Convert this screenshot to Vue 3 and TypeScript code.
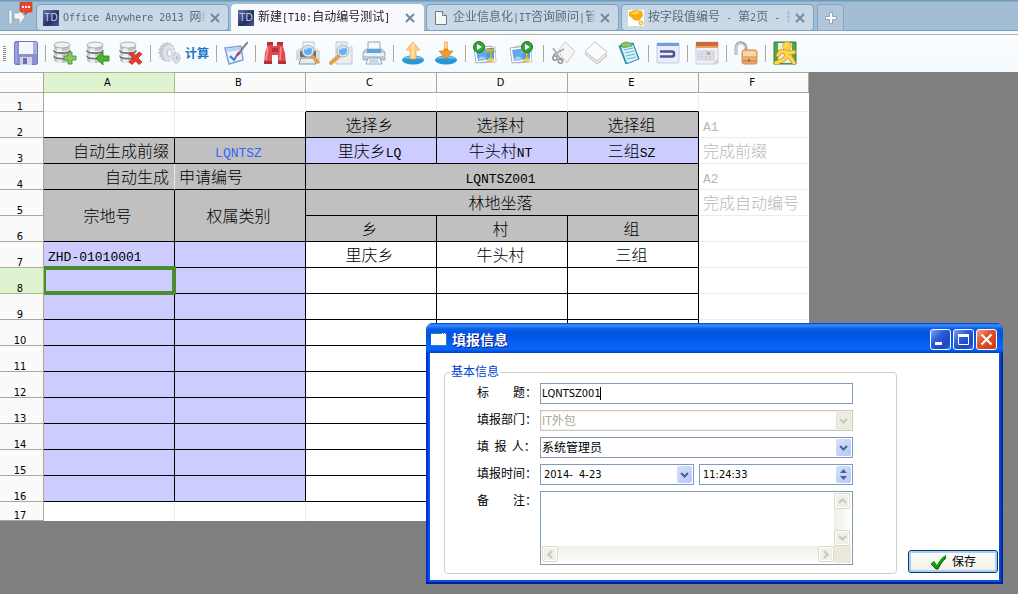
<script setup lang="ts">
import { ref } from 'vue'

interface Tab { title: string; icon: string; active?: boolean }
interface Cell { t?: string; c: string; cs?: number; rs?: number }
interface Tool { name: string; label: string; text?: string; framed?: boolean }

const runs = (text: string): { s: string; latin: boolean }[] =>
  (text.match(/[\x00-\x7f]+|[^\x00-\x7f]+/g) ?? []).map(s => ({ s, latin: s.charCodeAt(0) < 128 }))

const tabs: Tab[] = [
  { title: 'Office Anywhere 2013 网络', icon: 'td' },
  { title: '新建[T10:自动编号测试]', icon: 'td', active: true },
  { title: '企业信息化|IT咨询顾问|管', icon: 'page' },
  { title: '按字段值编号 - 第2页 - 技', icon: 'club' },
]

const db = `<path d="M1 4v15c0 2 3 3 8 3s8-1 8-3V4z" fill="#c4c4c4"/><path d="M4 5v16c1 .6 3 1 5 1V5z" fill="#ececec"/><path d="M1 9c0 4 16 4 16 0M1 14.500c0 4 16 4 16 0" fill="none" stroke="#777" stroke-width="1.800"/><path d="M1 8c0 3.500 16 3.500 16 0M1 13.500c0 3.500 16 3.500 16 0" fill="none" stroke="#fff" stroke-width=".8"/><ellipse cx="9" cy="4" rx="8" ry="3" fill="#f2f2f2" stroke="#999" stroke-width=".8"/>`
const lens = (x: number, y: number) => `<circle cx="${x}" cy="${y}" r="5" fill="#68aef5" stroke="#dfe8f2" stroke-width="1.800"/><circle cx="${x}" cy="${y}" r="6" fill="none" stroke="#8795a6" stroke-width=".6"/><path d="M${x - 3} ${y - 1}c1-3 4-3 5-2" stroke="#c5e4ff" stroke-width="1.500" fill="none"/>`
const sceneArt = `<path d="M7 5l15 1 1 15-15 1z" fill="#fff" stroke="#aaa" stroke-width=".7"/><path d="M1 7l17-2 2 15-17 2z" fill="#fff" stroke="#999" stroke-width=".8"/><path d="M3 9l14-2 1 11-13 2z" fill="#62a9ec"/><path d="M14 7h7v12h-7z" fill="#4c9ce8"/><path d="M5 19c2-5 6-4 8-1z" fill="#a9d4f5"/><path d="M14 20c1-4 5-4 7-2v2z" fill="#f3d234"/><path d="M18 18c0-4 0-6-1-8M17 10c-3-1-4 1-4 2M17 10c2-2 4-1 5 1M17 10c-1-2-3-2-4-1" stroke="#dcb71e" stroke-width="1.600" fill="none"/>`
const play = (x: number) => `<circle cx="${x}" cy="6" r="5.500" fill="#36a336" stroke="#187b25"/><path d="M${x - 2} 3v6l5-3z" fill="#fff"/>`

const icons: Record<string, string> = {
  save: `<rect x=".6" y=".6" width="22.800" height="22.800" rx="1.500" fill="#8b92d2" stroke="#6970b8"/><path d="M5 1h14v12H5z" fill="#f4f6fb"/><path d="M19 1h4v12h-4z" fill="#abb0e3"/><path d="M6 16h12v8H6z" fill="#d2d4df"/><path d="M9 17h4v6H9z" fill="#6871a9"/><path d="M2 2v20" stroke="#b5baf0"/>`,
  dbAdd: db + `<path d="M14 11h4v4h4v4h-4v4h-4v-4h-4v-4h4z" transform="translate(1)" fill="#87c65b" stroke="#458c28" stroke-width=".8"/>`,
  dbBack: db + `<path d="M10 17l7-6v4h6v5h-6v4z" fill="#49b52a" stroke="#248115" stroke-width=".8"/>`,
  dbDel: db + `<path d="M10 13l3-2 3.500 3.500L20 11l3 2-4 4 4 4-3 2.500-3.500-3.500-3.500 3.500-3-2.500 4-4z" fill="#e83a2d" stroke="#b21f19" stroke-width=".7"/>`,
  gears: `<ellipse cx="9" cy="11" rx="7.500" ry="9" fill="#c6ccd3" stroke="#c0c7cf" stroke-width="2" stroke-dasharray="2 1.400"/><ellipse cx="11" cy="12" rx="6" ry="8" fill="#dfe4ea"/><ellipse cx="11" cy="12" rx="2.500" ry="4" fill="#bfc7d0"/><ellipse cx="11.500" cy="12" rx="1.500" ry="3" fill="#f5fbff"/><ellipse cx="18.500" cy="17" rx="3.500" ry="5" fill="#dde1e6" stroke="#c0c7cf" stroke-width="1.500" stroke-dasharray="1.500 1"/><ellipse cx="19" cy="17" rx="1.200" ry="2" fill="#b5bdc7"/>`,
  check: `<path d="M1 7l16-2 2 14-14 4z" fill="#eaf3fe" stroke="#7fa2d6" stroke-width="1.500"/><path d="M2 8l14-2 .5 3-14 2z" fill="#b8d1f2"/><path d="M6 15l4 4 5-8" fill="none" stroke="#3f78cb" stroke-width="2"/><path d="M15 11l7-9 2-1-1 2-7 9z" fill="#8c8f99" stroke="#74504f" stroke-width=".6"/><path d="M12 14l3-3 2 1-3 3z" fill="#d0393b"/>`,
  binoculars: `<path d="M4 1h6v4h4V1h6v5l2 6 1 11h-8v-9H9v9H1l1-11 2-6z" fill="#dc4b4f"/><path d="M4 1h6v3H4zM14 1h6v3h-6zM1 20h8v3H1zM15 20h8v3h-8zM9 7h6v4H9z" fill="#b82f38"/><path d="M5 6L3 19M18 6l-1 13" stroke="#f58e8a" stroke-width="1.800"/>`,
  preview: `<path d="M7 1h11v9H7z" fill="#f5f7fa" stroke="#aaa" stroke-width=".7"/><path d="M0 10l4-3h16l4 3v9H0z" fill="#d8dade"/><path d="M4 10h16v6H4z" fill="#6f7276"/><path d="M5 17h13l2 6H3z" fill="#e9ebef" stroke="#777" stroke-width=".8"/><path d="M16 15l6 6" stroke="#df9e4b" stroke-width="3.500" stroke-linecap="round"/>` + lens(12, 10),
  search: `<path d="M7 1h11l5 5v17H7z" fill="#ecedf0" stroke="#c1c5cb"/><path d="M18 1v5h5" fill="#fff" stroke="#c1c5cb" stroke-width=".7"/><path d="M10 15l-8 7" stroke="#e1a34f" stroke-width="4" stroke-linecap="round"/>` + lens(14, 10),
  print: `<path d="M6 1h12v10H6z" fill="#f7f8fb" stroke="#8490a0" stroke-width=".8"/><path d="M1 11l3-3h16l3 3v8H1z" fill="#c3c9dd" stroke="#8d96b0" stroke-width=".6"/><path d="M5 8h14v4H5z" fill="#55a8dc"/><path d="M2 12h20v3H2z" fill="#eef0f7"/><path d="M6 17h12l2 6H4z" fill="#f8fafc" stroke="#8893a5" stroke-width=".8"/><path d="M7 19h9M7 21h10" stroke="#69afd9" stroke-width=".8"/>`,
  upload: `<ellipse cx="12" cy="19" rx="11" ry="4.500" fill="#2897d4"/><path d="M2 18c3-4 17-4 20 0-4-1-16-1-20 0z" fill="#75cdf0"/><path d="M12 1l7 8h-4v9H9V9H5z" fill="#ffcc80" stroke="#f4a94d" stroke-width=".7"/><path d="M12 3v14" stroke="#ffe5b5" stroke-width="2"/>`,
  download: `<ellipse cx="12" cy="19" rx="11" ry="4.500" fill="#2897d4"/><path d="M2 18c4-4 16-4 20 0-4-1-16-1-20 0z" fill="#75cdf0"/><path d="M10.500 9V1h3v8z" fill="#ffd796" stroke="#eca33d" stroke-width=".7"/><path d="M10 8h4v2h5l-7 8-7-8h5z" fill="#f59a2b" stroke="#d57a16" stroke-width=".7"/>`,
  picBack: sceneArt + play(6),
  picNext: sceneArt + play(18),
  cut: `<path d="M8 9l6-8 10 9-8 12-6-7z" fill="#f5f5f5" stroke="#c6c6c6"/><path d="M2 7l9 13M2 14l11-6" stroke="#a9a9a9" stroke-width="1.500"/><circle cx="4" cy="17" r="2.200" fill="none" stroke="#919191" stroke-width="1.400"/><circle cx="9.500" cy="20" r="2.200" fill="none" stroke="#919191" stroke-width="1.400"/>`,
  copy: `<path d="M1 13L10 3l13 12-10 8z" fill="#e9e9e9" stroke="#bdbdbd"/><path d="M1 10L11 1l12 10-10 9z" fill="#fcfcfc" stroke="#c3c3c3"/>`,
  paste: `<path d="M2 5l14-3 6 16-13 5z" fill="#2c9cb0" stroke="#2789a0"/><path d="M4 6l12-2 5 14-11 4z" fill="#d8f2ff"/><path d="M7 9l9-2M8 12l9-2M9 15l9-2M10 18l9-2" stroke="#62b1d5"/><path d="M4 3l4-2 6 1 1 3-9 2z" fill="#8ac65f" stroke="#4d9c4a" stroke-width=".7"/>`,
  link: `<rect x="1" y="2" width="22" height="20" rx="1" fill="#e9edf7" stroke="#c4cbdb"/><path d="M1 2h22v3H1z" fill="#6e9ee8"/><path d="M4 10.500h12q2 0 2 2v1q0 2-2 2H4" fill="none" stroke="#4d5697" stroke-width="2.500"/>`,
  calendar: `<rect x="1" y="1" width="22" height="22" rx="1" fill="#f1f1f3" stroke="#cfcdcf"/><path d="M1 1h22v5H1z" fill="#c96a37"/><path d="M1 5h22v2H1z" fill="#e59d6c"/><path d="M3 10h16v9H3z" fill="#e2e7f3"/><path d="M3 10h16v9H3zM7 10v9M11 10v9M15 10v9M3 13h16M3 16h16" fill="none" stroke="#c0c8de" stroke-width=".8"/><path d="M12 11h3v3h-3z" fill="#ee9878"/><path d="M17 23l6-6v6z" fill="#d4d4d4"/>`,
  unlock: `<path d="M2 14V7c0-7 9-7 10 0v3" fill="none" stroke="#a8a8a8" stroke-width="3"/><path d="M2 14V7c0-6 8-6 9 0" fill="none" stroke="#e4e4e4"/><rect x="8" y="9" width="15" height="14" rx="2" fill="#e9aa6c" stroke="#d18c52"/><path d="M9 10h13v5H9z" fill="#f8d5a9"/><path d="M9 20h13" stroke="#c97840"/><path d="M14 18h2v3h-2z" fill="#b56b38"/>`,
  exit: `<path d="M1 1h22v22H1z" fill="#51a647" stroke="#33853a"/><path d="M5 2h14v20H5z" fill="#e9ecea"/><path d="M12 10l-5 1-2 3M12 10l2 5-4 4-7 3M14 14l4 3 3 5M13 10l4 2 4-1" fill="none" stroke="#ce901b" stroke-width="4.500" stroke-linecap="round" stroke-linejoin="round"/><path d="M12 10l-5 1-2 3M12 10l2 5-4 4-7 3M14 14l4 3 3 5M13 10l4 2 4-1" fill="none" stroke="#ffd84c" stroke-width="3" stroke-linecap="round" stroke-linejoin="round"/><circle cx="14" cy="5" r="4.200" fill="#ffd34c" stroke="#dda026" stroke-width=".8"/>`,
}

const groups: Tool[][] = [
  [{ name: 'save', label: '保存表格' }],
  [{ name: 'dbAdd', label: '添加' }, { name: 'dbBack', label: '导入' }, { name: 'dbDel', label: '删除' }],
  [{ name: 'gears', label: '计算', text: '计算' }],
  [{ name: 'check', label: '校验' }],
  [{ name: 'binoculars', label: '查找' }, { name: 'preview', label: '打印预览' }, { name: 'search', label: '查看' }, { name: 'print', label: '打印' }],
  [{ name: 'upload', label: '上传' }, { name: 'download', label: '下载' }],
  [{ name: 'picBack', label: '上一图' }, { name: 'picNext', label: '下一图', framed: true }],
  [{ name: 'cut', label: '剪切' }, { name: 'copy', label: '复制' }, { name: 'paste', label: '粘贴' }],
  [{ name: 'link', label: '附件' }],
  [{ name: 'calendar', label: '日历' }],
  [{ name: 'unlock', label: '解锁' }],
  [{ name: 'exit', label: '退出' }],
]

const cols = ['A', 'B', 'C', 'D', 'E', 'F']
const note = (t = ''): Cell => ({ t, c: 'note' })
const entry = (): Cell[] => [
  { c: 'fill k' }, { c: 'fill k' }, { c: 'k' }, { c: 'k' }, { c: 'k' }, note(),
]

const rows: Cell[][] = [
  [{ c: '' }, { c: '' }, { c: 'kb' }, { c: 'kb' }, { c: 'kb' }, note()],
  [{ c: 'kb' }, { c: 'k' }, { t: '选择乡', c: 'head k' }, { t: '选择村', c: 'head k' }, { t: '选择组', c: 'head k' }, note('A1')],
  [{ t: '自动生成前缀', c: 'head k right' }, { t: 'LQNTSZ', c: 'head k blue' }, { t: '里庆乡LQ', c: 'fill k' }, { t: '牛头村NT', c: 'fill k' }, { t: '三组SZ', c: 'fill k' }, note('完成前缀')],
  [{ t: '自动生成', c: 'head kb right' }, { t: '申请编号', c: 'head k left' }, { t: 'LQNTSZ001', c: 'head k', cs: 3 }, note('A2')],
  [{ t: '宗地号', c: 'head k', rs: 2 }, { t: '权属类别', c: 'head k', rs: 2 }, { t: '林地坐落', c: 'head k', cs: 3 }, note('完成自动编号')],
  [{ t: '乡', c: 'head k' }, { t: '村', c: 'head k' }, { t: '组', c: 'head k' }, note()],
  [{ t: 'ZHD-01010001', c: 'fill k left' }, { c: 'fill k' }, { t: '里庆乡', c: 'k' }, { t: '牛头村', c: 'k' }, { t: '三组', c: 'k' }, note()],
  ...Array.from({ length: 9 }, entry),
  [{ c: 'last' }, { c: 'last' }, { c: 'last' }, { c: 'last' }, { c: 'last' }, { c: 'last' }],
]
rows[7][0].c += ' selected'

const title = ref('LQNTSZ001')
const dept = ref('IT外包')
const person = ref('系统管理员')
const date = ref('2014-  4-23')
const time = ref('11:24:33')
const remark = ref('')
</script>

<template>
  <div class="app">
    <nav class="tabs" aria-label="标签页">
      <button class="pin" type="button" aria-label="消息">
        <svg width="26" height="24" viewBox="0 0 26 24">
          <path d="M1 8h3v14H1zM6 11h5V7l6 8-6 8v-6H6z" fill="#f5f5f2" stroke="#8fa5b6" stroke-width=".7" />
          <path d="M12 1q0-1 1-1h10q1 0 1 1v8q0 1-1 1h-3l-3 3v-3h-4q-1 0-1-1z" fill="#ed442e" stroke="#c93426" stroke-width=".7" />
          <path d="M14 4h2v2h-2zM17 4h2v2h-2zM20 4h2v2h-2z" fill="#fff" />
        </svg>
      </button>
      <div v-for="tab in tabs" :key="tab.title" class="tab" :class="{ active: tab.active }">
        <span v-if="tab.icon === 'td'" class="td-logo">TD</span>
        <svg v-else-if="tab.icon === 'page'" class="tab-icon" viewBox="0 0 16 16">
          <path d="M2.500 1.500h7l4 4v9h-11z" fill="#f4f8f4" stroke="#727d80" /><path d="M9.500 1.500v4h4" fill="#d8dedb" stroke="#727d80" />
        </svg>
        <svg v-else class="tab-icon" viewBox="0 0 16 16">
          <path d="M0 0h16v16H0z" fill="#fff" /><path d="M1 2l6-2 7 1 1 5-4 5-5-1-3-3-2-1z" fill="#fba90a" /><path d="M2 3l7-2 3 2-5 2z" fill="#ffd34d" /><circle cx="13" cy="13" r="2" fill="#ffe09a" stroke="#f2a61b" />
        </svg>
        <a class="tab-title" href="#"><span v-for="(r, i) in runs(tab.title)" :key="i" :class="{ latin: r.latin }">{{ r.s }}</span></a>
        <button class="close" type="button" aria-label="关闭标签">
          <svg width="10" height="10" viewBox="0 0 10 10"><path d="M1 1l8 8M9 1L1 9" stroke="#6d8ba5" stroke-width="2" /></svg>
        </button>
      </div>
      <button class="add" type="button" aria-label="新标签页">
        <svg width="12" height="12" viewBox="0 0 12 12"><path d="M4.500.5h3v4h4v3h-4v4h-3v-4h-4v-3h4z" fill="#fff" stroke="#8697a6" stroke-width=".8" /></svg>
      </button>
    </nav>

    <div class="toolbar" role="toolbar">
      <span class="grip" />
      <div v-for="(group, g) in groups" :key="g" class="group">
        <button v-for="tool in group" :key="tool.name" type="button" class="tool" :class="{ wide: tool.text, framed: tool.framed }" :aria-label="tool.label">
          <svg width="24" height="24" viewBox="0 0 24 24" v-html="icons[tool.name]" />
          <span v-if="tool.text">{{ tool.text }}</span>
        </button>
      </div>
    </div>

    <main class="desk">
      <table class="sheet">
        <colgroup><col class="c-num"><col v-for="c in cols" :key="c" :class="c === 'F' ? 'c-last' : 'c-main'"></colgroup>
        <thead>
          <tr><th /><th v-for="c in cols" :key="c" scope="col" :class="{ on: c === 'A' }">{{ c }}</th></tr>
        </thead>
        <tbody>
          <tr v-for="(row, i) in rows" :key="i">
            <th scope="row" :class="{ on: i === 7 }">{{ i + 1 }}</th>
            <td v-for="(cell, j) in row" :key="j" :class="cell.c" :colspan="cell.cs" :rowspan="cell.rs">
              <span v-for="(r, n) in runs(cell.t ?? '')" :key="n" :class="{ latin: r.latin }">{{ r.s }}</span>
            </td>
          </tr>
        </tbody>
      </table>
    </main>

    <section class="dialog" role="dialog" aria-labelledby="dialog-title">
      <header class="titlebar">
        <svg width="16" height="13" viewBox="0 0 16 13"><path d="M0 0h16v13H0z" fill="#2d7fd0" /><path d="M0 1h15v11H0z" fill="#fffff8" /><path d="M11 0h1v1h-1zM13 0h1v1h-1z" fill="#fff" /></svg>
        <h1 id="dialog-title">填报信息</h1>
        <button type="button" class="win" aria-label="最小化"><svg viewBox="0 0 19 19"><path d="M4 12h7v3H4z" fill="#fff" /></svg></button>
        <button type="button" class="win" aria-label="最大化"><svg viewBox="0 0 19 19"><path d="M4.500 5.500h10v9h-10z" fill="none" stroke="#fff" /><path d="M4 4h11v3H4z" fill="#fff" /></svg></button>
        <button type="button" class="win quit" aria-label="关闭"><svg viewBox="0 0 19 19"><path d="M4.500 4.500l10 10M14.500 4.500l-10 10" stroke="#fff" stroke-width="2.200" /></svg></button>
      </header>
      <form class="body" @submit.prevent>
        <fieldset>
          <legend>基本信息</legend>
          <div class="fields">
            <label for="f-title">标　　题：</label>
            <div class="box typing"><span class="caret-host"><input id="f-title" v-model="title" type="text"></span></div>

            <label for="f-dept">填报部门：</label>
            <div class="box off">
              <select id="f-dept" v-model="dept" disabled><option>IT外包</option></select>
              <span class="drop"><svg viewBox="0 0 9 6"><path d="M1 1l3.500 3.500L8 1" /></svg></span>
            </div>

            <label for="f-person">填&#8194;报&#8194;人：</label>
            <div class="box">
              <select id="f-person" v-model="person"><option>系统管理员</option></select>
              <span class="drop"><svg viewBox="0 0 9 6"><path d="M1 1l3.500 3.500L8 1" /></svg></span>
            </div>

            <label for="f-date">填报时间：</label>
            <div class="pair">
              <div class="box">
                <input id="f-date" v-model="date" type="text">
                <button type="button" class="drop" aria-label="选择日期"><svg viewBox="0 0 9 6"><path d="M1 1l3.500 3.500L8 1" /></svg></button>
              </div>
              <div class="box">
                <input v-model="time" type="text" aria-label="时间">
                <span class="spin">
                  <button type="button" aria-label="增加"><svg viewBox="0 0 7 4"><path d="M0 4l3.500-4L7 4z" /></svg></button>
                  <button type="button" aria-label="减少"><svg viewBox="0 0 7 4"><path d="M0 0l3.500 4L7 0z" /></svg></button>
                </span>
              </div>
            </div>

            <label for="f-remark">备　　注：</label>
            <div class="memo">
              <textarea id="f-remark" v-model="remark" />
              <div class="bar v">
                <span class="arrow"><svg viewBox="0 0 9 6"><path d="M1 5l3.500-3.500L8 5" /></svg></span>
                <span class="arrow"><svg viewBox="0 0 9 6"><path d="M1 1l3.500 3.500L8 1" /></svg></span>
              </div>
              <div class="bar h">
                <span class="arrow"><svg class="side" viewBox="0 0 6 9"><path d="M5 1L1.500 4.500 5 8" /></svg></span>
                <span class="arrow"><svg class="side" viewBox="0 0 6 9"><path d="M1 1l3.500 3.500L1 8" /></svg></span>
              </div>
              <span class="corner" />
            </div>
          </div>
        </fieldset>
        <button type="submit" class="save">
          <svg width="17" height="16" viewBox="0 0 17 16"><path d="M1 9l3-2 3 4c2-4 5-8 9-10v3c-4 3-6 7-8 11H6z" fill="#07a30d" /><path d="M1 10l5 5h2c2-4 4-8 8-11" fill="none" stroke="#04510b" /></svg>
          保存
        </button>
      </form>
    </section>
  </div>
</template>

<style>
html, body { background: #808080; }
</style>

<style scoped>
* { box-sizing: border-box; }
.app {
  position: relative;
  display: flex;
  flex-direction: column;
  min-height: 100vh;
  overflow: hidden;
  background: #808080;
  color: #000;
  font: 12px/14px "DejaVu Sans Condensed", "Noto Sans CJK SC", sans-serif;
}
button { margin: 0; padding: 0; border: 0; background: none; color: inherit; font: inherit; }
svg { display: block; }

.tabs {
  display: flex;
  gap: 2px;
  height: 35px;
  padding-top: 3px;
  border-top: 1px solid #6d9bbc;
  border-bottom: 1px solid #b3b0a8;
  background: linear-gradient(#a3bdd4 0 29px, #7ba1c0 29px 30px, #f4f9fd 30px);
  box-shadow: inset 0 1px #86abc7;
}
.pin { display: flex; align-items: flex-start; width: 34px; padding-left: 8px; margin-top: -2px; }
.tab {
  display: flex;
  align-items: center;
  gap: 4px;
  width: 193px;
  height: 27px;
  padding: 0 8px 0 6px;
  border: 1px solid #7ba1c0;
  border-radius: 4px;
  background: linear-gradient(#c5d6e6, #cddae7);
  color: #5b6a78;
}
.tab.active { height: 30px; padding-bottom: 3px; border-color: #f8fafd; background: #f8fafd; color: #222; border-radius: 4px 4px 0 0; }
.td-logo {
  flex: none;
  width: 16px;
  height: 16px;
  background: linear-gradient(135deg, #6873a8, #252f68 60%, #4d5a91);
  color: #c9d0ea;
  font: 10px/16px "Liberation Sans", sans-serif;
  text-align: center;
}
.tab-icon { flex: none; width: 16px; height: 16px; }
.tab-title {
  flex: 1;
  min-width: 0;
  overflow: hidden;
  color: inherit;
  text-decoration: none;
  white-space: pre;
  line-height: 18px;
  mask-image: linear-gradient(90deg, #000 calc(100% - 8px), transparent);
}
.tab-title .latin { font: 10px/18px "DejaVu Sans Mono", monospace; }
.close { flex: none; width: 10px; }
.add {
  display: flex;
  align-items: center;
  justify-content: center;
  width: 27px;
  height: 27px;
  margin-left: 1px;
  border: 1px solid #85a5c0;
  border-radius: 3px 3px 0 0;
  background: #b1c6da;
}

.toolbar { display: flex; align-items: center; height: 37px; padding-left: 3px; background: linear-gradient(#fbfdff, #f3fafe); }
.grip { flex: none; width: 3px; height: 15px; margin-right: 8px; background: repeating-linear-gradient(#8c8c80 0 1px, transparent 1px 2px); }
.group { display: flex; align-items: center; gap: 9px; }
.group + .group::before { content: ""; width: 1px; height: 17px; margin: 0 -2px 0 7px; background: #aca899; }
.tool { display: flex; align-items: center; justify-content: center; height: 30px; padding-bottom: 2px; }
.tool.wide { gap: 3px; color: #1f77cb; font: bold 12px/16px "Noto Sans CJK SC", sans-serif; }
.tool.framed { width: 30px; border: 1px solid #f0f6fa; }

.desk { flex: 1; }
.sheet { width: 809px; table-layout: fixed; border-collapse: separate; border-spacing: 0; background: #fff; }
.c-num { width: 44px; }
.c-main { width: 131px; }
.c-last { width: 110px; }
th, td { height: 26px; padding: 0 3px 0 0; border: 0 solid #ececec; border-width: 0 1px 1px 0; overflow: hidden; white-space: pre; }
th { border-color: #aca899; background: #fafafa; color: #000; font: 11px/12px "DejaVu Sans Condensed", sans-serif; }
thead th { height: 21px; border-top-width: 1px; }
tbody th { vertical-align: bottom; line-height: 8px; }
th.on { background: #dff3d0; border-color: #a5bd8d; }
tbody tr:first-child > *, tbody tr:last-child > * { height: 19px; }
td { position: relative; padding-bottom: 2px; font: 16px/20px "Noto Sans CJK SC", sans-serif; font-weight: 300; text-align: center; }
tbody tr:first-child td, tbody tr:last-child td { padding: 0; line-height: 16px; }
td .latin { font: 13px/12px "Liberation Mono", monospace; }
.head { background: #c0c0c0; }
.fill { background: #ccccff; }
.k { border-color: #000; }
.kb { border-bottom-color: #000; }
.right { padding-right: 5px; text-align: right; }
.left { padding-left: 4px; text-align: left; }
.blue { color: #3366ff; }
.note { padding-left: 4px; border-right-color: #fff; color: #b8b8b8; text-align: left; }
.last { border-bottom-color: #fff; }
.selected { overflow: visible; }
.selected::after {
  content: "";
  position: absolute;
  inset: -2px -2px -2px 0;
  z-index: 1;
  border: 4px solid #4b8d2c;
  border-left-width: 2px;
}

.dialog {
  position: absolute;
  z-index: 2;
  top: 323px;
  left: 426px;
  width: 577px;
  padding: 0 4px 4px;
  border-radius: 7px 7px 0 0;
  background: linear-gradient(90deg, #0019cf, #0855dd 3px, #0855dd calc(100% - 4px), #001ea0);
  box-shadow: inset 0 -2px #001ea0;
}
.titlebar {
  display: flex;
  align-items: center;
  gap: 2px;
  height: 30px;
  margin: 0 -4px;
  padding: 2px 6px 0 5px;
  border-radius: 7px 7px 0 0;
  background: linear-gradient(#0831d9, #3a91ff 2px, #0a5ce5 6px, #0054e3 12px, #0562f5 22px, #0569ff 26px, #0042c4);
}
h1 { flex: 1; margin: 0 0 0 3px; color: #fff; font: bold 14px/20px "Noto Sans CJK SC", sans-serif; text-shadow: 1px 1px #0a1883; }
.win {
  width: 21px;
  height: 21px;
  border: 1px solid #fff;
  border-radius: 3px;
  background: linear-gradient(135deg, #7da2f2, #2c5bd8 40%, #1c47c5 75%, #2b6df0);
}
.win.quit { background: linear-gradient(135deg, #f0a18a, #e0532c 40%, #c93a12); }
.body { display: flex; align-items: flex-end; gap: 11px; padding: 12px 1px 6px 14px; background: #fff; }
fieldset { flex: 1; min-width: 0; margin: 0; padding: 4px 0 8px 32px; border: 1px solid #d0d0bf; border-radius: 4px; }
legend { margin-left: -27px; padding: 0 1px; color: #0046d5; line-height: 14px; }
.fields { display: grid; grid-template-columns: 63px 313px; gap: 6px 0; }
label { line-height: 20px; white-space: pre; }
.box { display: flex; align-items: center; height: 21px; padding: 1px; border: 1px solid #7f9db9; background: #fff; }
.box input, .box select {
  flex: 1;
  min-width: 0;
  height: 17px;
  padding: 0;
  border: 0;
  outline: 0;
  background: none;
  color: #000;
  font: 12px/16px "DejaVu Sans Condensed", "Noto Sans CJK SC", sans-serif;
  appearance: none;
  opacity: 1;
}
.box input { padding-left: 2px; font-size: 11px; }
.caret-host { position: relative; display: flex; flex: 1; }
.typing .caret-host input { padding-left: 0; }
.typing .caret-host::after { content: ""; position: absolute; top: 2px; left: 58px; width: 1px; height: 13px; background: #000; }
.off { border-color: #c9c7ba; background: #f5f4ea; }
.off select { background: #fff; color: #aca899; }
.drop, .spin {
  flex: none;
  display: flex;
  align-items: center;
  justify-content: center;
  width: 15px;
  height: 17px;
  border-radius: 2px;
  background: linear-gradient(135deg, #d5e0fd, #b3c8f8);
}
.drop svg { width: 9px; height: 6px; }
.drop path, .arrow path { fill: none; stroke: #4d6185; stroke-width: 2; }
.off .drop { background: #eeede5; box-shadow: inset 0 0 0 1px #e3e1d5; }
.off .drop path, .arrow path { stroke: #c9c7ba; }
.spin { flex-direction: column; gap: 3px; }
.spin svg { width: 7px; height: 4px; fill: #4d6185; }
.pair { display: grid; grid-template-columns: 1fr 1fr; gap: 5px; }
.memo { display: grid; grid-template: 1fr 17px / 1fr 17px; height: 74px; padding: 1px; border: 1px solid #7f9db9; }
.memo textarea { min-width: 0; min-height: 0; padding: 2px; border: 0; outline: 0; resize: none; overflow: hidden; font: inherit; }
.bar { display: flex; justify-content: space-between; }
.bar.v { flex-direction: column; background: linear-gradient(90deg, #efeee8, #fff); }
.bar.h { background: linear-gradient(#efeee8, #fff); }
.arrow {
  display: flex;
  align-items: center;
  justify-content: center;
  width: 16px;
  height: 16px;
  border: 1px solid #dddacb;
  border-radius: 2px;
  background: #f0efe8;
  box-shadow: inset 0 0 0 1px #fff;
}
.arrow svg { width: 9px; height: 6px; }
.arrow .side { width: 6px; height: 9px; }
.corner { background: #ece9d8; }
.save {
  flex: none;
  display: flex;
  align-items: center;
  justify-content: center;
  gap: 5px;
  width: 90px;
  height: 23px;
  margin-bottom: 1px;
  border: 1px solid #003c74;
  border-radius: 3px;
  background: linear-gradient(#fdfdfb, #f0efe7);
  box-shadow: inset 0 0 0 2px #b4cbf0;
}
</style>
